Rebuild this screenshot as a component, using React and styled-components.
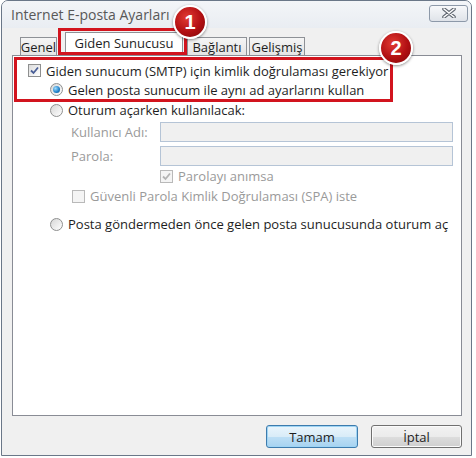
import React from 'react';
import styled, { createGlobalStyle } from 'styled-components';

const GlobalStyle = createGlobalStyle`
  body {
    margin: 0;
    background: #ffffff;
    font-family: "Open Sans", "DejaVu Sans", sans-serif;
  }
`;

const Window = styled.div`
  box-sizing: border-box;
  width: 471px;
  height: 456px;
  margin: 0 0 0 1px;
  border: 1px solid #6a7788;
  border-radius: 7px 7px 0 0;
  background: #f0f0f0;
  display: flex;
  flex-direction: column;
  position: relative;
`;

const TitleBar = styled.div`
  height: 27px;
  display: flex;
  align-items: center;
  justify-content: space-between;
  padding: 0 3px 0 9px;
  background: linear-gradient(#f3f5f8, #e9edf2);
  border-radius: 6px 6px 0 0;
  font-size: 14px;
  color: #585858;
`;

const CloseButton = styled.div`
  box-sizing: border-box;
  width: 39px;
  height: 17px;
  margin-top: -3px;
  border: 1px solid #8d99a9;
  border-radius: 3px;
  background: linear-gradient(#f7f8fa, #dfe3e9);
  display: flex;
  align-items: center;
  justify-content: center;
`;

const Body = styled.div`
  flex: 1;
  display: flex;
  flex-direction: column;
  padding: 0 8px 0 10px;
`;

const TabRow = styled.div`
  height: 27px;
  display: flex;
  align-items: flex-end;
  padding-left: 8px;
`;

const Tab = styled.div`
  box-sizing: border-box;
  height: ${({ $active }) => ($active ? '20px' : '18px')};
  width: ${({ $w }) => $w}px;
  margin-right: ${({ $mr }) => $mr || 0}px;
  border: 1px solid #8e9196;
  border-bottom: none;
  background: ${({ $active }) =>
    $active ? '#ffffff' : 'linear-gradient(#f5f5f5, #e4e4e4)'};
  display: flex;
  align-items: center;
  justify-content: center;
  font-size: 13px;
  color: #1e1e1e;
`;

const Highlight = styled.div`
  box-sizing: border-box;
  position: relative;
  width: 129px;
  height: 27px;
  margin-right: 0;
  border: 3px solid #d2141e;
  padding: 0 1px 0 4px;
  display: flex;
  align-items: flex-end;
`;

const Badge = styled.div`
  position: absolute;
  top: ${({ $top }) => $top}px;
  left: ${({ $left }) => $left}px;
  box-sizing: border-box;
  width: 34px;
  height: 34px;
  border-radius: 50%;
  border: 2px solid #ffffff;
  background: radial-gradient(circle at 40% 35%, #e23a33, #b10f12 55%, #7d0708);
  box-shadow: 0 1px 3px rgba(0, 0, 0, 0.45);
  color: #ffffff;
  font-family: "Liberation Sans", Arial, sans-serif;
  font-weight: bold;
  font-size: 20px;
  display: flex;
  align-items: center;
  justify-content: center;
  z-index: 2;
`;

const Panel = styled.div`
  box-sizing: border-box;
  width: 450px;
  height: 361px;
  border: 1px solid #898c95;
  background: #ffffff;
  display: flex;
  flex-direction: column;
`;

const RedBox = styled.div`
  box-sizing: border-box;
  width: 379px;
  height: 45px;
  margin: 1px 0 0 1px;
  border: 3px solid #d2141e;
  padding: 1px 0 0 11px;
  display: flex;
  flex-direction: column;
  position: relative;
`;

const Row = styled.div`
  height: ${({ $h }) => $h || 19}px;
  margin-left: ${({ $indent }) => $indent || 0}px;
  margin-top: ${({ $mt }) => $mt || 0}px;
  display: flex;
  align-items: center;
  gap: 5px;
  font-size: 13px;
  color: ${({ $disabled }) => ($disabled ? '#9a9a9a' : '#1e1e1e')};
  white-space: nowrap;
`;

const FieldRow = styled.div`
  height: 20px;
  margin-top: ${({ $mt }) => $mt || 0}px;
  display: flex;
  align-items: center;
  padding-left: 58px;
`;

const Label = styled.div`
  width: 89px;
  font-size: 13px;
  color: #9a9a9a;
`;

const Input = styled.div`
  box-sizing: border-box;
  width: 293px;
  height: 20px;
  border: 1px solid #b5c4d6;
  background: #f0f0f0;
`;

const CheckBox = styled.div`
  box-sizing: border-box;
  width: 13px;
  height: 13px;
  flex: none;
  border: 1px solid ${({ $disabled }) => ($disabled ? '#b9b9b9' : '#8e8f8f')};
  background: ${({ $disabled }) =>
    $disabled ? '#f4f4f4' : 'linear-gradient(135deg, #dcdcdc, #ffffff)'};
  display: flex;
  align-items: center;
  justify-content: center;
`;

const Radio = styled.div`
  box-sizing: border-box;
  width: 13px;
  height: 13px;
  flex: none;
  border-radius: 50%;
  border: 1px solid #8e8f8f;
  background: linear-gradient(135deg, #d6d6d6, #ffffff);
  display: flex;
  align-items: center;
  justify-content: center;
`;

const Dot = styled.div`
  width: 7px;
  height: 7px;
  border-radius: 50%;
  background: radial-gradient(circle at 35% 35%, #9fdcff, #1d7fc7 60%, #0f4e86);
`;

const Footer = styled.div`
  display: flex;
  justify-content: flex-end;
  gap: 13px;
  padding: 9px 1px 0 0;
`;

const Button = styled.div`
  box-sizing: border-box;
  width: ${({ $w }) => $w}px;
  height: 23px;
  border-radius: 3px;
  border: 1px solid ${({ $default }) => ($default ? '#3d7bad' : '#707070')};
  box-shadow: ${({ $default }) =>
    $default ? 'inset 0 0 0 1px #9fd4f4' : 'inset 0 0 0 1px #fbfbfb'};
  background: ${({ $default }) =>
    $default
      ? 'linear-gradient(#eaf5fc 0%, #d9ecf8 50%, #bedff5 51%, #a7d3f1 100%)'
      : 'linear-gradient(#f2f2f2 0%, #ebebeb 50%, #dddddd 51%, #cfcfcf 100%)'};
  display: flex;
  align-items: center;
  justify-content: center;
  font-size: 13px;
  color: #1e1e1e;
`;

const Check = ({ color = '#4a5f97' }) => (
  <svg width="11" height="11" viewBox="0 0 11 11">
    <path d="M2 5.5 L4.5 8 L9 2.5" fill="none" stroke={color} strokeWidth="1.8" />
  </svg>
);

const CloseIcon = () => (
  <svg width="14" height="10" viewBox="0 0 14 10">
    <path d="M2 1 L12 9 M12 1 L2 9" stroke="#5f6670" strokeWidth="3.6" strokeLinecap="round" />
    <path d="M2 1 L12 9 M12 1 L2 9" stroke="#ffffff" strokeWidth="1.6" strokeLinecap="round" />
  </svg>
);

export default function App() {
  return (
    <>
      <GlobalStyle />
      <Window>
        <TitleBar>
          <span>Internet E-posta Ayarları</span>
          <CloseButton>
            <CloseIcon />
          </CloseButton>
        </TitleBar>
        <Body>
          <TabRow>
            <Tab $w={37} $mr={1}>Genel</Tab>
            <Highlight>
              <Tab $active $w={118}>Giden Sunucusu</Tab>
              <Badge $top={-26} $left={112}>1</Badge>
            </Highlight>
            <Tab $w={60} $mr={2}>Bağlantı</Tab>
            <Tab $w={56}>Gelişmiş</Tab>
          </TabRow>
          <Panel>
            <RedBox>
              <Row>
                <CheckBox>
                  <Check />
                </CheckBox>
                Giden sunucum (SMTP) için kimlik doğrulaması gerekiyor
              </Row>
              <Row $indent={22}>
                <Radio>
                  <Dot />
                </Radio>
                Gelen posta sunucum ile aynı ad ayarlarını kullan
              </Row>
              <Badge $top={-29} $left={362}>2</Badge>
            </RedBox>
            <Row $indent={37} $h={18} $mt={-1}>
              <Radio />
              Oturum açarken kullanılacak:
            </Row>
            <FieldRow $mt={3}>
              <Label>Kullanıcı Adı:</Label>
              <Input />
            </FieldRow>
            <FieldRow $mt={4}>
              <Label>Parola:</Label>
              <Input />
            </FieldRow>
            <Row $indent={147} $h={20} $disabled>
              <CheckBox $disabled>
                <Check color="#b3b3b3" />
              </CheckBox>
              Parolayı anımsa
            </Row>
            <Row $indent={59} $h={20} $disabled>
              <CheckBox $disabled />
              Güvenli Parola Kimlik Doğrulaması (SPA) iste
            </Row>
            <Row $indent={37} $h={20} $mt={8}>
              <Radio />
              Posta göndermeden önce gelen posta sunucusunda oturum aç
            </Row>
          </Panel>
          <Footer>
            <Button $default $w={92}>Tamam</Button>
            <Button $w={91}>İptal</Button>
          </Footer>
        </Body>
      </Window>
    </>
  );
}
